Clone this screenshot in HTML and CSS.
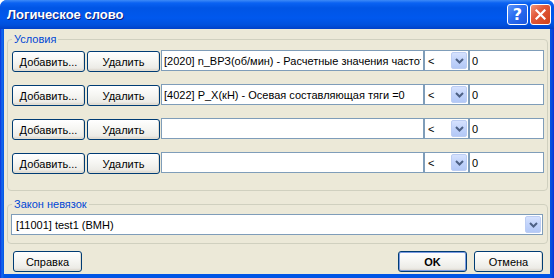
FILE: index.html
```html
<!DOCTYPE html>
<html lang="ru">

<head>
    <meta charset="UTF-8">
    <meta name="viewport" content="width=device-width, initial-scale=1.0">
    <link rel="stylesheet" href="styles.css">
    <title>Логическое слово</title>
</head>

<body>
    <div class="window">
        <div class="titlebar">
            <span class="title">Логическое слово</span>
            <div class="caption-buttons">
                <div class="cap help">?</div>
                <div class="cap close">
                    <svg width="11" height="11" viewBox="0 0 11 11">
                        <path d="M1.5 1.5 L9.5 9.5 M9.5 1.5 L1.5 9.5" stroke="#fff" stroke-width="2.2" stroke-linecap="square" fill="none"/>
                    </svg>
                </div>
            </div>
        </div>

        <div class="client">
            <fieldset class="group conditions">
                <legend>Условия</legend>
                <div class="rows">
                    <div class="row">
                        <button class="btn">Добавить...</button>
                        <button class="btn">Удалить</button>
                        <div class="field name"><span class="clip">[2020] n_ВРЗ(об/мин) - Расчетные значения частот</span></div>
                        <div class="field combo op">
                            <span>&lt;</span>
                            <span class="drop"><svg width="9" height="6" viewBox="0 0 9 6"><path d="M1 1 L4.5 4.5 L8 1" stroke="#4d6185" stroke-width="2" fill="none"/></svg></span>
                        </div>
                        <div class="field value">0</div>
                    </div>
                    <div class="row">
                        <button class="btn">Добавить...</button>
                        <button class="btn">Удалить</button>
                        <div class="field name"><span class="clip">[4022] P_X(кН) - Осевая составляющая тяги =0</span></div>
                        <div class="field combo op">
                            <span>&lt;</span>
                            <span class="drop"><svg width="9" height="6" viewBox="0 0 9 6"><path d="M1 1 L4.5 4.5 L8 1" stroke="#4d6185" stroke-width="2" fill="none"/></svg></span>
                        </div>
                        <div class="field value">0</div>
                    </div>
                    <div class="row">
                        <button class="btn">Добавить...</button>
                        <button class="btn">Удалить</button>
                        <div class="field name"></div>
                        <div class="field combo op">
                            <span>&lt;</span>
                            <span class="drop"><svg width="9" height="6" viewBox="0 0 9 6"><path d="M1 1 L4.5 4.5 L8 1" stroke="#4d6185" stroke-width="2" fill="none"/></svg></span>
                        </div>
                        <div class="field value">0</div>
                    </div>
                    <div class="row">
                        <button class="btn">Добавить...</button>
                        <button class="btn">Удалить</button>
                        <div class="field name"></div>
                        <div class="field combo op">
                            <span>&lt;</span>
                            <span class="drop"><svg width="9" height="6" viewBox="0 0 9 6"><path d="M1 1 L4.5 4.5 L8 1" stroke="#4d6185" stroke-width="2" fill="none"/></svg></span>
                        </div>
                        <div class="field value">0</div>
                    </div>
                </div>
            </fieldset>

            <fieldset class="group law">
                <legend>Закон невязок</legend>
                <div class="field combo wide">
                    <span>[11001] test1 (ВМН)</span>
                    <span class="drop"><svg width="9" height="6" viewBox="0 0 9 6"><path d="M1 1 L4.5 4.5 L8 1" stroke="#4d6185" stroke-width="2" fill="none"/></svg></span>
                </div>
            </fieldset>

            <div class="footer">
                <button class="btn">Справка</button>
                <div class="spacer"></div>
                <button class="btn default">OK</button>
                <button class="btn">Отмена</button>
            </div>
        </div>
    </div>
</body>

</html>
```

FILE: styles.css
```css
* {
    box-sizing: border-box;
}

body {
    margin: 0;
    background-color: #fff;
    font-family: "Liberation Sans", Arial, sans-serif;
    font-size: 11px;
    color: #000;
}

.window {
    width: 554px;
    height: 278px;
    display: flex;
    flex-direction: column;
    background: linear-gradient(to right, #0831d9 0, #166aee 2px, #0055e5 4px, #0055e5 550px, #0a4cd8 552px, #0831d9 554px);
    border-radius: 7px 7px 0 0;
    overflow: hidden;
}

.titlebar {
    height: 29px;
    flex: none;
    display: flex;
    align-items: center;
    padding: 0 3px 0 7px;
    background: linear-gradient(#3d8af7 0, #0a62f2 3px, #0055e5 8px, #0058ee 18px, #0050dc 25px, #0040c8 29px);
}

.title {
    flex: 1;
    color: #fff;
    font-weight: bold;
    font-size: 13px;
    text-shadow: 1px 1px 0 #0a1e7a;
}

.caption-buttons {
    display: flex;
    gap: 2px;
}

.cap {
    width: 21px;
    height: 21px;
    border: 1px solid #fff;
    border-radius: 3px;
    display: flex;
    align-items: center;
    justify-content: center;
}

.help {
    background: linear-gradient(135deg, #5b95fb 0%, #2a6cf0 45%, #1a56de 100%);
    color: #fff;
    font-weight: bold;
    font-size: 16px;
    font-family: "DejaVu Sans", sans-serif;
}

.close {
    background: linear-gradient(135deg, #f1967a 0%, #e2593a 40%, #cf4119 100%);
}

.client {
    flex: 1;
    margin: 0 4px 4px 4px;
    background-color: #ece9d8;
    padding: 4px 2px 2px 3px;
    display: flex;
    flex-direction: column;
}

.group {
    margin: 0;
    border: 1px solid #d0d0bf;
    border-radius: 4px;
    min-width: 0;
}

.group legend {
    padding: 0 2px;
    color: #0046d5;
    line-height: 13px;
}

.conditions {
    padding: 4px 3px 17px 4px;
}

.rows {
    display: flex;
    flex-direction: column;
    gap: 13px;
}

.row {
    display: flex;
    height: 21px;
}

.btn {
    font: inherit;
    color: #000;
    height: 21px;
    padding: 0;
    border: 1px solid #003c74;
    border-radius: 3px;
    background: linear-gradient(#ffffff 0%, #f6f6f3 45%, #ecebe6 85%, #d6d0c5 100%);
    box-shadow: inset -1px -1px 0 #e2ded3;
}

.row .btn {
    width: 73px;
    margin-top: 1px;
    margin-right: 2px;
}

.row .btn + .btn {
    margin-right: 1px;
}

.field {
    height: 21px;
    border: 1px solid #7f9db9;
    background-color: #fff;
    padding: 0 2px;
    display: flex;
    align-items: center;
    white-space: nowrap;
    overflow: hidden;
}

.name {
    flex: 1;
    min-width: 0;
}

.clip {
    min-width: 0;
    overflow: hidden;
}

.op {
    width: 45px;
    flex: none;
    padding: 0 1px 0 3px;
}

.value {
    width: 75px;
    flex: none;
}

.combo .drop {
    margin-left: auto;
    width: 16px;
    height: 17px;
    flex: none;
    border: 1px solid #bccdf3;
    border-radius: 2px;
    background: linear-gradient(#d6e2fe, #c1d3fb 50%, #b3c8f6);
    display: flex;
    align-items: center;
    justify-content: center;
}

.law {
    margin-top: 7px;
    padding: 3px 4px 8px 3px;
}

.law legend {
    margin-left: 1px;
}

.wide {
    padding: 0 1px 0 4px;
}

.footer {
    margin-top: 7px;
    display: flex;
    padding: 0 5px 0 6px;
}

.footer .btn {
    width: 69px;
}

.spacer {
    flex: 1;
}

.default {
    font-weight: bold;
    margin-right: 7px;
    box-shadow: inset 0 0 0 1px #7a9ae0;
}
```
